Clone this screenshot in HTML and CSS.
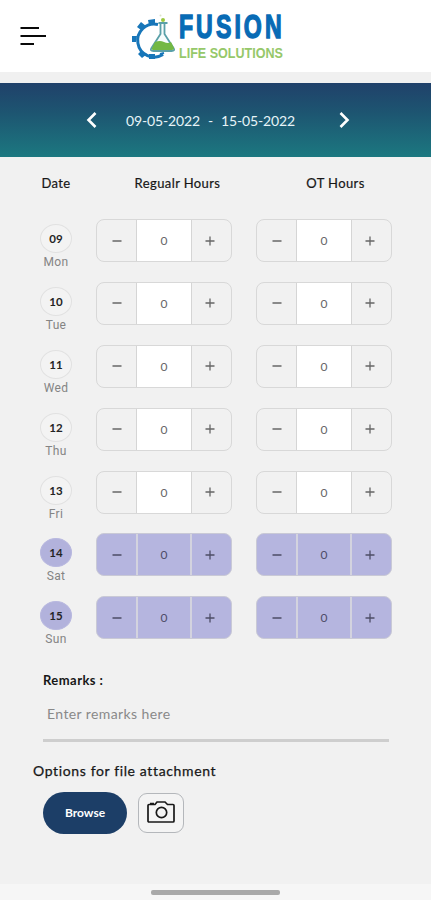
FILE: index.html
```html
<!DOCTYPE html>
<html lang="en">
<head>
<meta charset="utf-8">
<meta name="viewport" content="width=device-width, initial-scale=1">
<title>Timesheet</title>
<link rel="stylesheet" href="styles.css">
</head>
<body>
<header class="topbar">
  <svg class="menu" width="28" height="22" viewBox="0 0 28 22" fill="none" stroke="#090909" stroke-width="2.2"><path d="M.5 3H19M.5 11H26M.5 19H14"/></svg>
  <svg class="logo" width="164" height="60" viewBox="0 0 164 60">
    <path d="M27 16.500A16.500 16.500 0 1 0 32 46.500" fill="none" stroke="#1776b9" stroke-width="3"/>
    <path d="M18 17l-1-5 7-1v5zM10 22l-4-3 4-5 5 4zM5 34H1v-6h5zM10 43l-3 3 4 4 5-4zM18 46v5h6v-5z" fill="#1776b9"/>
    <path d="M29 46l4-1" stroke="#1776b9" stroke-width="2"/>
    <path d="M27.500 15h9M29.500 15v11l-9 14q-2 3 2 3h18q4 0 2-3l-9-14V15" fill="#f7fcfc" stroke="#5aa0a8" stroke-width="1.800"/>
    <path d="M24 34q5-2 9 0t7 0l3 6q0 2-3 2H23q-3 0-2-2z" fill="#73b843"/>
    <circle cx="32" cy="12" r="2" fill="#9bc83f"/><circle cx="29.500" cy="7.500" r="1" fill="#dbe5c7"/>
    <g transform="scale(.68 1)"><text class="brand" x="70.500" y="30.500" textLength="151" lengthAdjust="spacing">FUSION</text></g>
    <text class="tagline" x="48" y="49.500" textLength="104" lengthAdjust="spacingAndGlyphs">LIFE SOLUTIONS</text>
  </svg>
</header>
<nav class="week">
  <svg width="12" height="18" viewBox="0 0 12 18" fill="none" stroke="#fff" stroke-width="2.600"><path d="M9.500 2L2.500 9l7 7"/></svg>
  <div class="range"><span>09-05-2022</span><span>-</span><span>15-05-2022</span></div>
  <svg width="12" height="18" viewBox="0 0 12 18" fill="none" stroke="#fff" stroke-width="2.600"><path d="M2.500 2l7 7-7 7"/></svg>
</nav>
<main>
  <div class="columns heads"><span>Date</span><span>Regualr Hours</span><span>OT Hours</span></div>
  <section class="days" id="days"></section>
  <section class="remarks">
    <label for="remarks">Remarks :</label>
    <input id="remarks" placeholder="Enter remarks here">
  </section>
  <section class="attach">
    <h2>Options for file attachment</h2>
    <div class="actions">
      <button class="browse">Browse</button>
      <button class="camera" aria-label="Camera"><svg width="30" height="24" viewBox="0 0 30 24" fill="none" stroke="#191919" stroke-width="1.700"><path d="M3 4.500h6L11 2h8l2.500 2.500H27q1 0 1 1V21q0 1-1 1H3q-1 0-1-1V5.500q0-1 1-1z"/><circle cx="15.500" cy="12.500" r="5.200"/><path d="M4 3.600h4"/></svg></button>
    </div>
  </section>
</main>
<footer><div class="handle"></div></footer>
<script src="script.js"></script>
</body>
</html>
```
FILE: styles.css
```css
* { box-sizing: border-box; }
body { margin: 0; height: 900px; display: flex; flex-direction: column; background: #f1f1f1; color: #171717; font-family: Lato, "Liberation Sans", sans-serif; overflow: hidden; }
.topbar { height: 83px; flex: none; display: flex; align-items: flex-start; background: #fff; border-bottom: 11px solid #f0f0f0; padding: 8px 0 0 20px; }
.menu { margin-top: 17px; }
.logo { margin-left: 83px; overflow: visible; }
.brand { font: 700 34px "Liberation Sans", sans-serif; fill: #086bb5; stroke: #086bb5; stroke-width: 1.5px; }
.tagline { font: 700 15px "Liberation Sans", sans-serif; fill: #96c86a; }
.week { height: 74px; flex: none; display: flex; align-items: center; justify-content: space-between; padding: 0 81px 0 86px; background: linear-gradient(#20416a, #1d5571 40%, #1c7880); }
.range { display: flex; gap: 8px; margin-right: 15px; color: #e7f4f8; font-size: 14px; letter-spacing: -.15px; white-space: pre; }
main { flex: 1; }
.columns { display: grid; grid-template-columns: 32px 136px 136px; column-gap: 24px; padding-left: 40px; }
.heads { height: 62px; padding-top: 18px; font-size: 13px; line-height: 17px; letter-spacing: .4px; -webkit-text-stroke: .2px #171717; text-align: center; white-space: nowrap; }
.heads span:nth-child(2) { padding-left: 27px; }
.heads span:nth-child(3) { padding-left: 23px; }
.row { height: 62.900px; }
.date { display: flex; flex-direction: column; align-items: center; padding-top: 5px; }
.num { width: 32px; height: 29px; display: grid; place-items: center; border: 1px solid #e1e1e1; border-radius: 50%; font-size: 11.500px; font-weight: 700; color: #242424; background: #f3f3f3; }
.day { font: 12px/16px Roboto, sans-serif; letter-spacing: .3px; color: #848484; margin-top: 1px; }
.stepper { height: 43px; display: grid; grid-template-columns: 39px 56px 39px; border: 1px solid #d8d8d8; border-radius: 8px; overflow: hidden; color: #666; }
.stepper > * { display: grid; place-items: center; }
.stepper > :last-child { padding-right: 4px; }
.value { background: #fff; border: solid #d5d5d5; border-width: 0 1.500px; font-size: 12px; }
.weekend .num { background: #b2b2dc; border-color: #b8b8df; }
.weekend .stepper { background: #b5b5df; border-color: #c9c9d6; color: #4d4d66; }
.weekend .value { background: #b5b5df; border-color: #d3d3df; border-width: 0 2px; }
.remarks { padding: 11px 42px 0 43px; margin-top: .7px; }
.remarks label { display: block; font-size: 13px; line-height: 18px; font-weight: 700; letter-spacing: .45px; }
.remarks input { display: block; width: 100%; height: 53px; padding: 0 4px; border: 0; border-bottom: 3px solid #cecece; background: transparent; outline: 0; font: 14px Lato, sans-serif; letter-spacing: .4px; }
.remarks input::placeholder { color: #898989; }
.attach { padding: 19px 0 0 33px; }
h2 { margin: 0; font-size: 14px; line-height: 20px; font-weight: 400; letter-spacing: .63px; -webkit-text-stroke: .25px #171717; }
.actions { display: flex; gap: 11px; align-items: center; padding: 11px 0 0 10px; }
button { padding: 0; font-family: inherit; }
.browse { width: 84px; height: 42px; border: 0; border-radius: 21px; background: #1c3e67; color: #fff; font-size: 12px; font-weight: 700; }
.camera { width: 46px; height: 40px; display: grid; place-items: center; border: 1px solid #b4b7bb; border-radius: 9px; background: #f4f4f4; margin-top: 1px; }
.camera svg { margin-top: -3px; }
footer { height: 16px; flex: none; background: #f6f6f6; display: flex; justify-content: center; padding-top: 6px; }
.handle { width: 129px; height: 5px; border-radius: 2px; background: #a9a9a9; }
```
FILE: script.js
```js
const minus = '<span><svg width="12" height="12" viewBox="0 0 12 12" stroke="currentColor" stroke-width="1.300"><path d="M1.500 6h9"/></svg></span>';
const plus = '<span><svg width="12" height="12" viewBox="0 0 12 12" stroke="currentColor" stroke-width="1.300"><path d="M1.500 6h9M6 1.500v9"/></svg></span>';
const stepper = `<div class="stepper">${minus}<span class="value">0</span>${plus}</div>`;
const names = ['Mon', 'Tue', 'Wed', 'Thu', 'Fri', 'Sat', 'Sun'];
document.getElementById('days').innerHTML = names.map((name, i) =>
  `<div class="columns row${i > 4 ? ' weekend' : ''}"><div class="date"><span class="num">${String(9 + i).padStart(2, '0')}</span><span class="day">${name}</span></div>${stepper}${stepper}</div>`
).join('');
```
